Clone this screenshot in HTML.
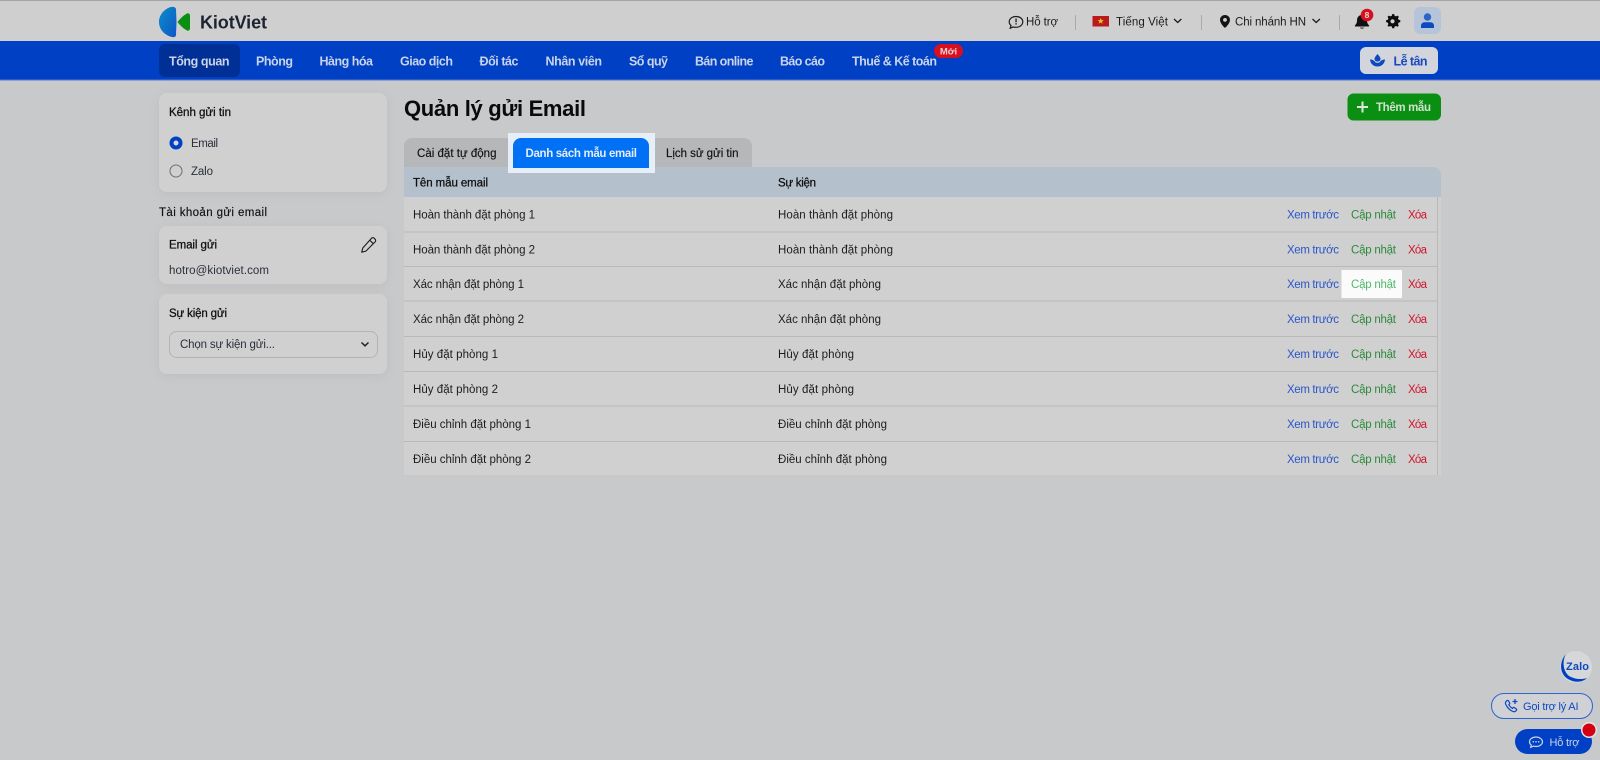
<!DOCTYPE html>
<html lang="vi"><head><meta charset="utf-8"><title>Quản lý gửi Email</title>
<style>
html,body{margin:0;padding:0;width:1600px;height:760px;overflow:hidden;background:#c8c9cb}
svg{display:block;filter:blur(.3px)}
text{font-family:"Liberation Sans",sans-serif;font-size:11.5px;fill:#1c1c1c}
.nav{font-size:12.5px;font-weight:700;fill:#c9d3ea}
.b{font-weight:700}
.m{fill:#111;stroke:#111;stroke-width:.28px}
.x{fill:#2b55c8}.c{fill:#2c8a3b}.d{fill:#d0142c}
</style></head><body>
<svg width="1600" height="760" viewBox="0 0 1600 760" xmlns="http://www.w3.org/2000/svg">
<defs>
<linearGradient id="lg" x1="0" y1="0" x2="1" y2="1"><stop offset="0" stop-color="#0a8fc8"/><stop offset="1" stop-color="#0f55c8"/></linearGradient>
<filter id="sh" x="-10%" y="-10%" width="120%" height="125%"><feDropShadow dx="0" dy="2" stdDeviation="5" flood-color="#000" flood-opacity=".06"/></filter>
</defs>
<rect width="1600" height="760" fill="#c8c9cb"/>
<!-- top header -->
<rect width="1600" height="41" fill="#cfcfcf"/>
<rect width="1600" height="1" fill="#a4a4a4"/>
<path d="M171 7C164 9 159 15 159 22C159 29 164 35 172 37C175 37.500 176 36.500 176 34.500L176.500 22L176 9.500C176 7.500 174 6.500 171 7Z" fill="url(#lg)"/>
<path d="M187 13.500C189 12.800 190 14 190 16V28C190 30 189 31.200 187 30.500C183 28.500 180 25 177.500 22C180 19 183 15.500 187 13.500Z" fill="#0b8f12"/>
<text x="200" y="28.500" textLength="67" style="font-size:18px;font-weight:700;fill:#1b2430">KiotViet</text>

<path d="M1016 16.500c-3.900 0-6.800 2.400-6.800 5.300 0 1.400.6 2.700 1.800 3.700l-.8 2.700 3.100-1.300c.8.300 1.700.4 2.700.4 3.900 0 6.800-2.400 6.800-5.500S1019.900 16.500 1016 16.500z" fill="none" stroke="#1c1c1c" stroke-width="1.200"/>
<rect x="1015.400" y="18.500" width="1.300" height="3.800" fill="#1c1c1c"/><rect x="1015.400" y="23.200" width="1.300" height="1.400" fill="#1c1c1c"/>
<text x="1026" y="25.500" textLength="32">Hỗ trợ</text>
<rect x="1075" y="15" width="1" height="15" fill="#a9a9a9"/>
<rect x="1092.500" y="16" width="16.500" height="10.500" fill="#b81a1e"/>
<path d="M1100.700 17.800l.8 2.300h2.400l-1.900 1.400.7 2.300-2-1.400-2 1.400.7-2.300-1.900-1.400h2.400z" fill="#e8c81a"/>
<text x="1116" y="25.500" textLength="52">Tiếng Việt</text>
<path d="M1174 19l3.700 3.500 3.700-3.500" fill="none" stroke="#1c1c1c" stroke-width="1.300"/>
<rect x="1201" y="15" width="1" height="15" fill="#a9a9a9"/>
<path d="M1225 15c-2.900 0-5 2.200-5 5 0 3.700 5 8 5 8s5-4.300 5-8c0-2.800-2.100-5-5-5zm0 6.800a1.900 1.900 0 1 1 0-3.800 1.900 1.900 0 0 1 0 3.800z" fill="#141414"/>
<text x="1235" y="25.500" textLength="71">Chi nhánh HN</text>
<path d="M1312.500 19l3.700 3.500 3.700-3.500" fill="none" stroke="#1c1c1c" stroke-width="1.300"/>
<rect x="1339" y="15" width="1" height="15" fill="#a9a9a9"/>
<path d="M1362 15c-3.300 0-5 2.500-5 5.300 0 2.800-.8 3.800-2 5.100-.4.500-.2 1.100.5 1.100h13c.7 0 .9-.6.500-1.100-1.200-1.300-2-2.300-2-5.100 0-2.800-1.700-5.300-5-5.300z" fill="#111"/>
<path d="M1359.800 27.600a2.300 1.500 0 0 0 4.400 0z" fill="#111"/>
<circle cx="1367" cy="15" r="6.300" fill="#d80f1e"/>
<text x="1367" y="18" text-anchor="middle" style="font-size:8.500px;font-weight:700;fill:#f3d6d6">8</text>
<path d="M1392.500 14.800l1.700.1.500 1.700 1.400.6 1.600-.8 1.200 1.200-.8 1.600.6 1.400 1.700.5v1.800l-1.700.5-.6 1.400.8 1.600-1.200 1.200-1.600-.8-1.400.6-.5 1.700h-1.800l-.5-1.700-1.400-.6-1.600.8-1.200-1.200.8-1.600-.6-1.400-1.700-.5v-1.800l1.700-.5.6-1.400-.8-1.600 1.200-1.200 1.600.8 1.400-.6.500-1.700z" fill="#0d0d0d" transform="translate(-.1 -.8)"/>
<circle cx="1392.500" cy="21.300" r="2.100" fill="#cfcfcf"/>
<rect x="1414" y="7" width="27" height="27" rx="6" fill="#b5c4d8"/>
<circle cx="1427.500" cy="17" r="3.700" fill="#2a66c8"/>
<path d="M1421 28v-2.500c0-2 1.800-3.300 3.800-3.300h5.400c2 0 3.800 1.300 3.800 3.300V28z" fill="#0f49c0"/>

<!-- nav -->
<rect y="41" width="1600" height="39" fill="#0040c4"/>
<rect y="79.500" width="1600" height="1" fill="#5b79cb"/>
<rect x="159" y="44" width="81" height="33" rx="6" fill="#002f96"/>
<text class="nav" x="169" y="65.500" textLength="60.500">Tổng quan</text>
<text class="nav" x="256" y="65.500" textLength="37">Phòng</text>
<text class="nav" x="319.500" y="65.500" textLength="53.500">Hàng hóa</text>
<text class="nav" x="400" y="65.500" textLength="53">Giao dịch</text>
<text class="nav" x="479.500" y="65.500" textLength="39">Đối tác</text>
<text class="nav" x="545.500" y="65.500" textLength="56.500">Nhân viên</text>
<text class="nav" x="629" y="65.500" textLength="39">Sổ quỹ</text>
<text class="nav" x="695" y="65.500" textLength="58.500">Bán online</text>
<text class="nav" x="780" y="65.500" textLength="45">Báo cáo</text>
<text class="nav" x="852" y="65.500" textLength="85">Thuế &amp; Kế toán</text>
<rect x="934" y="44" width="29" height="14" rx="7" fill="#d80f1e"/>
<text x="948.500" y="54.500" text-anchor="middle" style="font-size:9.500px;font-weight:700;fill:#eed3d3">Mới</text>
<rect x="1360" y="47" width="78" height="27" rx="6" fill="#d3d5dc"/>
<path d="M1377.500 54c2 2.400 3 3.700 3 5 0 1.500-1.300 2.500-3 2.500s-3-1-3-2.500c0-1.300 1-2.600 3-5z" fill="#0f49c0"/>
<path d="M1370 59.500c2.500 0 4 1 5 2.300.8 1 1.500 1 2.500 1s1.700 0 2.500-1c1-1.300 2.500-2.300 5-2.300-.3 4-3.300 7-7.500 7s-7.200-3-7.500-7z" fill="#0f49c0"/>
<text x="1393.500" y="65.500" textLength="34" style="font-size:12.500px;font-weight:700;fill:#1a49bf">Lễ tân</text>

<!-- left cards -->
<rect x="159" y="93" width="228" height="99" rx="8" fill="#d0d0d0" filter="url(#sh)"/>
<text class="m" x="169" y="116" textLength="62">Kênh gửi tin</text>
<circle cx="176" cy="143" r="6.500" fill="#0040c4"/><circle cx="176" cy="143" r="2.500" fill="#d8d8d8"/>
<text x="191" y="147" textLength="27" style="fill:#2a2f3a">Email</text>
<circle cx="176" cy="171" r="6" fill="none" stroke="#6c7078" stroke-width="1"/>
<text x="191" y="175" textLength="22" style="fill:#2a2f3a">Zalo</text>
<text class="m" x="159" y="216" textLength="108" style="stroke-width:.15px">Tài khoản gửi email</text>
<rect x="159" y="226" width="228" height="58" rx="8" fill="#d0d0d0" filter="url(#sh)"/>
<text class="m" x="169" y="248.500" textLength="48">Email gửi</text>
<path d="M371.500 238.300a1.900 1.900 0 0 1 2.700 0l.9.900a1.900 1.900 0 0 1 0 2.700l-9.200 9.200-4.200 1.100 1.100-4.200zM369.700 240.100l3.600 3.600" fill="none" stroke="#1a1a1a" stroke-width="1.100" stroke-linejoin="round"/>
<text x="169" y="274" textLength="100" style="fill:#2a2f3a">hotro@kiotviet.com</text>
<rect x="159" y="294" width="228" height="80" rx="8" fill="#d0d0d0" filter="url(#sh)"/>
<text class="m" x="169" y="317" textLength="58">Sự kiện gửi</text>
<rect x="169.500" y="331.500" width="208" height="26" rx="7" fill="none" stroke="#b2b3b5"/>
<text x="180" y="348" textLength="95" style="fill:#2a2f3a">Chọn sự kiện gửi...</text>
<path d="M361.500 342.500l3.500 3.300 3.500-3.300" fill="none" stroke="#222" stroke-width="1.500"/>

<!-- main -->
<text x="404" y="116" textLength="182" style="font-size:22px;font-weight:700;fill:#0a0a0a">Quản lý gửi Email</text>
<rect x="1347.500" y="93.500" width="93.500" height="27" rx="6" fill="#0b8f12"/>
<path d="M1362.500 101.500v11M1357 107h11" stroke="#dfe6df" stroke-width="2"/>
<text x="1376" y="111" textLength="55" class="b" style="fill:#cfe0cf">Thêm mẫu</text>

<path d="M404 167v-21a8 8 0 0 1 8-8h96v29z" fill="#b6b7b9"/>
<path d="M655 167v-29h89a8 8 0 0 1 8 8v21z" fill="#b6b7b9"/>
<text class="m" x="417" y="157" textLength="79.500" style="stroke-width:.15px">Cài đặt tự động</text>
<text class="m" x="666" y="157" textLength="72.500" style="stroke-width:.15px">Lịch sử gửi tin</text>
<path d="M404 167H1433a8 8 0 0 1 8 8V197H404z" fill="#b4c1cd"/>
<rect x="404" y="196.500" width="1037" height="1" fill="#aebfd6"/>
<rect x="404" y="197" width="1037" height="278" fill="#d0d0d0"/>
<rect x="508" y="133" width="147" height="40" fill="#e6eef8"/>
<path d="M513 168v-22a8 8 0 0 1 8-8h120a8 8 0 0 1 8 8v22z" fill="#0070f4"/>
<text x="525.500" y="157" textLength="111.500" class="b" style="fill:#e2ecfa">Danh sách mẫu email</text>
<text class="m" x="413" y="186.500" textLength="75">Tên mẫu email</text>
<text class="m" x="778" y="186.500" textLength="38">Sự kiện</text>

<g fill="#b9b9b9">
<rect x="404" y="231.500" width="1033" height="1"/>
<rect x="404" y="266" width="1033" height="1"/>
<rect x="404" y="300.500" width="1033" height="1"/>
<rect x="404" y="336" width="1033" height="1"/>
<rect x="404" y="371" width="1033" height="1"/>
<rect x="404" y="405.500" width="1033" height="1"/>
<rect x="404" y="441" width="1033" height="1"/>
<rect x="1437" y="197" width="1" height="278"/>
</g>
<rect x="1341.500" y="270" width="60.500" height="28" fill="#fbfbfb"/>

<text x="413" y="218.500" textLength="122">Hoàn thành đặt phòng 1</text><text x="778" y="218.500" textLength="115">Hoàn thành đặt phòng</text>
<text class="x" x="1287" y="218.500" textLength="52">Xem trước</text><text class="c" x="1351" y="218.500" textLength="45">Cập nhật</text><text class="d" x="1408" y="218.500" textLength="19">Xóa</text>

<text x="413" y="253.500" textLength="122">Hoàn thành đặt phòng 2</text><text x="778" y="253.500" textLength="115">Hoàn thành đặt phòng</text>
<text class="x" x="1287" y="253.500" textLength="52">Xem trước</text><text class="c" x="1351" y="253.500" textLength="45">Cập nhật</text><text class="d" x="1408" y="253.500" textLength="19">Xóa</text>

<text x="413" y="288" textLength="111">Xác nhận đặt phòng 1</text><text x="778" y="288" textLength="103">Xác nhận đặt phòng</text>
<text class="x" x="1287" y="288" textLength="52">Xem trước</text><text x="1351" y="288" textLength="45" style="fill:#4cbb6a">Cập nhật</text><text class="d" x="1408" y="288" textLength="19">Xóa</text>

<text x="413" y="323" textLength="111">Xác nhận đặt phòng 2</text><text x="778" y="323" textLength="103">Xác nhận đặt phòng</text>
<text class="x" x="1287" y="323" textLength="52">Xem trước</text><text class="c" x="1351" y="323" textLength="45">Cập nhật</text><text class="d" x="1408" y="323" textLength="19">Xóa</text>

<text x="413" y="358" textLength="85">Hủy đặt phòng 1</text><text x="778" y="358" textLength="76">Hủy đặt phòng</text>
<text class="x" x="1287" y="358" textLength="52">Xem trước</text><text class="c" x="1351" y="358" textLength="45">Cập nhật</text><text class="d" x="1408" y="358" textLength="19">Xóa</text>

<text x="413" y="393" textLength="85">Hủy đặt phòng 2</text><text x="778" y="393" textLength="76">Hủy đặt phòng</text>
<text class="x" x="1287" y="393" textLength="52">Xem trước</text><text class="c" x="1351" y="393" textLength="45">Cập nhật</text><text class="d" x="1408" y="393" textLength="19">Xóa</text>

<text x="413" y="428" textLength="118">Điều chỉnh đặt phòng 1</text><text x="778" y="428" textLength="109">Điều chỉnh đặt phòng</text>
<text class="x" x="1287" y="428" textLength="52">Xem trước</text><text class="c" x="1351" y="428" textLength="45">Cập nhật</text><text class="d" x="1408" y="428" textLength="19">Xóa</text>

<text x="413" y="463" textLength="118">Điều chỉnh đặt phòng 2</text><text x="778" y="463" textLength="109">Điều chỉnh đặt phòng</text>
<text class="x" x="1287" y="463" textLength="52">Xem trước</text><text class="c" x="1351" y="463" textLength="45">Cập nhật</text><text class="d" x="1408" y="463" textLength="19">Xóa</text>

<!-- floating widgets -->
<circle cx="1576" cy="667" r="16" fill="#d6d7d9"/>
<path d="M1566 654C1558 663 1560 676 1570 680C1576 683 1583 682 1587 678C1581 680 1574 679 1569 676C1563 671 1562 661 1566 654Z" fill="#0040c4"/>
<text x="1566" y="670" textLength="23" style="font-size:11px;font-weight:700;fill:#0f49c0">Zalo</text>
<rect x="1491.500" y="693.500" width="101" height="25" rx="12.500" fill="#cfd1d6" stroke="#2c66cc"/>
<path d="M1506 701.500c-.8.800-.8 2 .2 3.700 1.200 2.300 3.400 4.600 5.700 5.800 1.600.9 2.900 1 3.700.2l.9-1c.3-.4.3-.9-.1-1.200l-2-1.400c-.4-.3-.9-.2-1.200.1l-.6.700c-1.500-.7-3-2.300-3.800-3.900l.7-.6c.3-.3.400-.8.100-1.200l-1.300-2c-.3-.4-.9-.4-1.200-.1z" fill="none" stroke="#0f49c0" stroke-width="1.200"/>
<path d="M1515 699v5M1512.500 701.500h5" stroke="#0f49c0" stroke-width="1.300"/>
<text x="1523" y="710" textLength="55.500" style="fill:#0f49c0;font-size:11px">Gọi trợ lý AI</text>
<rect x="1515" y="729" width="77" height="25" rx="12.500" fill="#0040c4"/>
<path d="M1536 737c-3.600 0-6.500 2.100-6.500 4.800 0 1.300.7 2.500 1.800 3.300l-.6 2.200 2.800-1.200c.8.300 1.600.4 2.500.4 3.600 0 6.500-2.100 6.500-4.700s-2.900-4.800-6.500-4.800z" fill="none" stroke="#c9d3ea" stroke-width="1.200"/>
<circle cx="1533.300" cy="741.800" r=".8" fill="#c9d3ea"/><circle cx="1536" cy="741.800" r=".8" fill="#c9d3ea"/><circle cx="1538.700" cy="741.800" r=".8" fill="#c9d3ea"/>
<text x="1549.500" y="746" textLength="30" style="fill:#c9d3ea;font-size:11px">Hỗ trợ</text>
<circle cx="1589" cy="730" r="8" fill="#e2e3e5"/><circle cx="1589" cy="730" r="6.500" fill="#d40012"/>
</svg>
</body></html>
